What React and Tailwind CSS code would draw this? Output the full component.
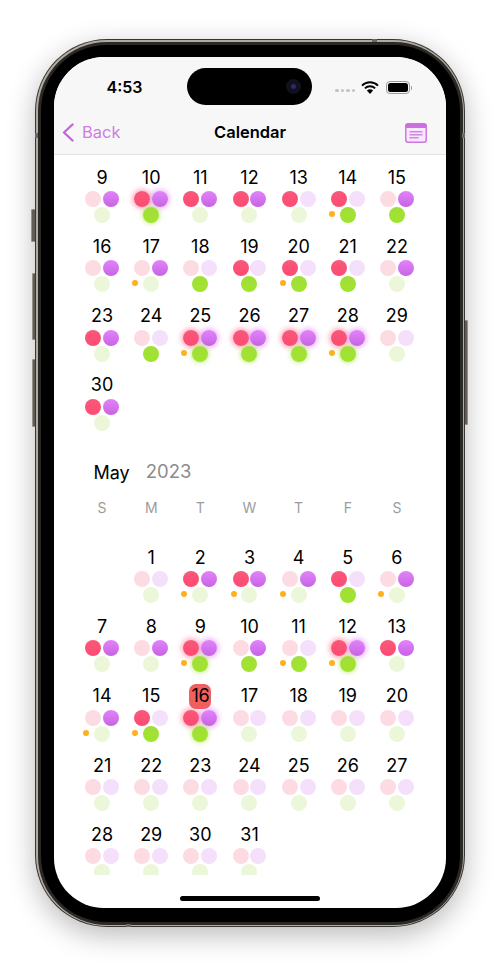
const FONT = 'font-["Inter","Liberation_Sans",sans-serif]';

// flags: r = red on, p = purple on, g = green on, o = orange dot, * = glow
const APRIL = [
  [9, 'p'], [10, 'rpg*'], [11, 'rp'], [12, 'rp'], [13, 'r'], [14, 'rgo'], [15, 'pg'],
  [16, 'p'], [17, 'po'], [18, 'g'], [19, 'rg'], [20, 'rgo'], [21, 'rg'], [22, 'p'],
  [23, 'rp'], [24, 'g'], [25, 'rpgo*'], [26, 'rpg*'], [27, 'rpg*'], [28, 'rpgo*'], [29, ''],
  [30, 'rp'],
];

const MAY = [
  [null, ''], [1, ''], [2, 'rpo'], [3, 'rpo'], [4, 'po'], [5, 'rg'], [6, 'po'],
  [7, 'rp'], [8, 'p'], [9, 'rpgo*'], [10, 'pg'], [11, 'go'], [12, 'rpgo*'], [13, 'rp'],
  [14, 'po'], [15, 'rgo'], [16, 'rpg*'], [17, ''], [18, ''], [19, ''], [20, ''],
  [21, ''], [22, ''], [23, ''], [24, ''], [25, ''], [26, ''], [27, ''],
  [28, ''], [29, ''], [30, ''], [31, ''],
];

const WEEKDAYS = ['S', 'M', 'T', 'W', 'T', 'F', 'S'];

function Red({ on, glow }) {
  if (!on) return <div className="size-4 rounded-full bg-[#fddbe3]" />;
  return (
    <div className={`size-4 rounded-full bg-linear-to-b from-[#f8587a] to-[#ff4a72] ${glow ? 'shadow-[0_0_5px_2px_rgba(255,70,110,0.45)]' : ''}`} />
  );
}

function Purple({ on, glow }) {
  if (!on) return <div className="size-4 rounded-full bg-[#f4e0fb]" />;
  return (
    <div className={`size-4 rounded-full bg-linear-to-b from-[#e283fb] to-[#c763e3] ${glow ? 'shadow-[0_0_5px_2px_rgba(215,100,245,0.45)]' : ''}`} />
  );
}

function Green({ on, glow }) {
  if (!on) return <div className="size-4 rounded-full bg-[#ebf7d8]" />;
  return (
    <div className={`size-4 rounded-full bg-linear-to-b from-[#a2dd3a] to-[#a0e52c] ${glow ? 'shadow-[0_0_4px_1px_rgba(160,225,50,0.55)]' : ''}`} />
  );
}

function DayCell({ day, flags, today }) {
  if (day === null) return <div className="h-[69.3px]" />;
  const glow = flags.includes('*');
  return (
    <div className="flex h-[69.3px] flex-col items-center">
      <div className={`flex items-center justify-center text-[18px] leading-none text-black ${today ? 'mb-[-1px] h-[25px] w-[22px] rounded-[7px] bg-[#f0605f] tracking-[-0.5px]' : 'h-6 pt-px'}`}>
        {day}
      </div>
      <div className="relative mt-0.5 flex flex-col items-center">
        <div className="flex gap-[1.8px]">
          <Red on={flags.includes('r')} glow={glow} />
          <Purple on={flags.includes('p')} glow={glow} />
        </div>
        <Green on={flags.includes('g')} glow={glow} />
        {flags.includes('o') && (
          <div className="absolute left-[-2px] top-[20px] size-1.5 rounded-full bg-[#ffb01f]" />
        )}
      </div>
    </div>
  );
}

function StatusBar() {
  return (
    <div className="flex h-12 items-start pt-[11px]">
      <div className="flex h-[37px] w-[133px] items-center justify-center pl-[8px] text-[16px] font-semibold text-black">4:53</div>
      <div className="relative h-[37px] w-[125px] shrink-0 rounded-full bg-black">
        <div className="absolute right-[11px] top-[11px] flex size-[15px] items-center justify-center rounded-full bg-[#10101e]">
          <div className="size-[5px] rounded-full bg-[#2a2a6a]" />
        </div>
      </div>
      <div className="flex h-[37px] flex-1 items-center pl-[23px] pt-[2px]">
        <div className="mt-[6px] flex gap-[2px]">
          <div className="size-[3.5px] rounded-full bg-[#c4c4c4]" />
          <div className="size-[3.5px] rounded-full bg-[#c4c4c4]" />
          <div className="size-[3.5px] rounded-full bg-[#c4c4c4]" />
          <div className="size-[3.5px] rounded-full bg-[#c4c4c4]" />
        </div>
        <svg className="ml-[6px]" width="18" height="13" viewBox="0 0 18 13">
          <path d="M1 4.6 A11.4 11.4 0 0 1 17 4.6" fill="none" stroke="#000" strokeWidth="2" />
          <path d="M3.9 7.4 A7.4 7.4 0 0 1 14.1 7.4" fill="none" stroke="#000" strokeWidth="2" />
          <path d="M9 13 L5.9 9.6 A4.4 4.4 0 0 1 12.1 9.6 Z" fill="#000" />
        </svg>
        <div className="ml-[7px] flex items-center">
          <div className="h-[13px] w-[24px] rounded-[4px] border border-[#9b9b9b] p-[1px]">
            <div className="h-full w-full rounded-[2.5px] bg-black" />
          </div>
          <div className="ml-[1px] h-1 w-[1px] rounded-r bg-[#9b9b9b]" />
        </div>
      </div>
    </div>
  );
}

function NavBar() {
  return (
    <div className="grid h-[50px] grid-cols-[152px_auto_1fr] items-center border-b border-[#e2e2e2] pb-px pl-2 pr-[19px] pt-[7px]">
      <div className="flex items-center">
        <svg width="12" height="19" viewBox="0 0 12 19">
          <path d="M10.5 1.5 L2 9.5 L10.5 17.5" fill="none" stroke="#c565dd" strokeWidth="2.4" strokeLinecap="round" strokeLinejoin="round" />
        </svg>
        <span className="ml-[8px] text-[16.5px] text-[#cf7ce4]">Back</span>
      </div>
      <div className="text-[16.5px] font-semibold text-black">Calendar</div>
      <div className="flex justify-end">
        <svg width="22" height="20" viewBox="0 0 22 20">
          <rect x="0.75" y="0.75" width="20.5" height="18.5" rx="2.5" fill="#f7e9fb" stroke="#cf74e3" strokeWidth="1.5" />
          <path d="M3 0.5 H19 A2.5 2.5 0 0 1 21.5 3 V5 H0.5 V3 A2.5 2.5 0 0 1 3 0.5 Z" fill="#cc6fe0" />
          <rect x="4.5" y="8" width="13" height="1.5" fill="#d684e8" />
          <rect x="4.5" y="11" width="13" height="1.5" fill="#d684e8" />
          <rect x="4.5" y="14" width="9" height="1.5" fill="#d684e8" />
        </svg>
      </div>
    </div>
  );
}

function Calendar() {
  return (
    <div className="h-[719.5px] overflow-hidden pl-[23.5px] pr-[24.5px] pt-2.5">
      <div className="grid grid-cols-7">
        {APRIL.map(([day, flags]) => (
          <DayCell key={day} day={day} flags={flags} />
        ))}
      </div>
      <div className="mt-[18px] flex h-6 items-center gap-4 pl-[16px] text-[18px]">
        <span className="text-black">May</span>
        <span className="text-[18.5px] text-[#8c8c8c]">2023</span>
      </div>
      <div className="mb-[26px] mt-[11px] grid h-6 grid-cols-7 items-center">
        {WEEKDAYS.map((name, i) => (
          <div key={i} className="text-center text-[14px] text-[#9c9c9c]">{name}</div>
        ))}
      </div>
      <div className="grid grid-cols-7">
        {MAY.map(([day, flags], i) => (
          <DayCell key={i} day={day} flags={flags} today={day === 16} />
        ))}
      </div>
    </div>
  );
}

export default function App() {
  return (
    <div className={`flex h-[966px] w-[500px] justify-center overflow-hidden bg-white pt-[39px] ${FONT}`}>
      <div className="relative h-[888px] w-[430px]">
        {/* side buttons */}
        <div className="absolute left-[-4px] top-[170px] h-[33px] w-[5px] rounded-l-[1px] border border-[#a8a29a] bg-[#6e6a65]" />
        <div className="absolute left-[-3px] top-[234px] h-[67px] w-[4px] rounded-l-[1px] border border-[#a8a29a] bg-[#6e6a65]" />
        <div className="absolute left-[-3px] top-[320px] h-[68px] w-[4px] rounded-l-[1px] border border-[#a8a29a] bg-[#6e6a65]" />
        <div className="absolute right-[-3px] top-[281px] h-[105px] w-[4px] rounded-r-[1px] border border-[#a8a29a] bg-[#6e6a65]" />

        <div className="relative h-full rounded-[72px] bg-[#3a3733] p-px shadow-[0_8px_28px_rgba(0,0,0,0.28)]">
          <div className="h-full rounded-[71px] bg-[#b2aba1] p-[1.5px]">
            <div className="h-full rounded-[69px] bg-[#2b2926] p-[3px]">
              <div className="h-full rounded-[66px] bg-black px-[13.5px] pb-[13.5px] pt-[12.5px]">
                <div className="flex h-[851px] flex-col overflow-hidden rounded-[50px] bg-white">
                  <div className="bg-[#f7f7f7]">
                    <StatusBar />
                    <NavBar />
                  </div>
                  <Calendar />
                  <div className="flex flex-1 justify-center pt-[21px]">
                    <div className="h-[5px] w-[140px] rounded-full bg-black" />
                  </div>
                </div>
              </div>
            </div>
          </div>
        </div>

        {/* antenna bands */}
        <div className="absolute left-0 top-[94px] h-[5px] w-[3px] bg-[#6b6763]" />
        <div className="absolute right-0 top-[94px] h-[5px] w-[3px] bg-[#6b6763]" />
        <div className="absolute left-[337px] top-0 h-[3px] w-[5px] bg-[#6b6763]" />
        <div className="absolute bottom-0 left-[91px] h-[3px] w-[5px] bg-[#6b6763]" />
      </div>
    </div>
  );
}
